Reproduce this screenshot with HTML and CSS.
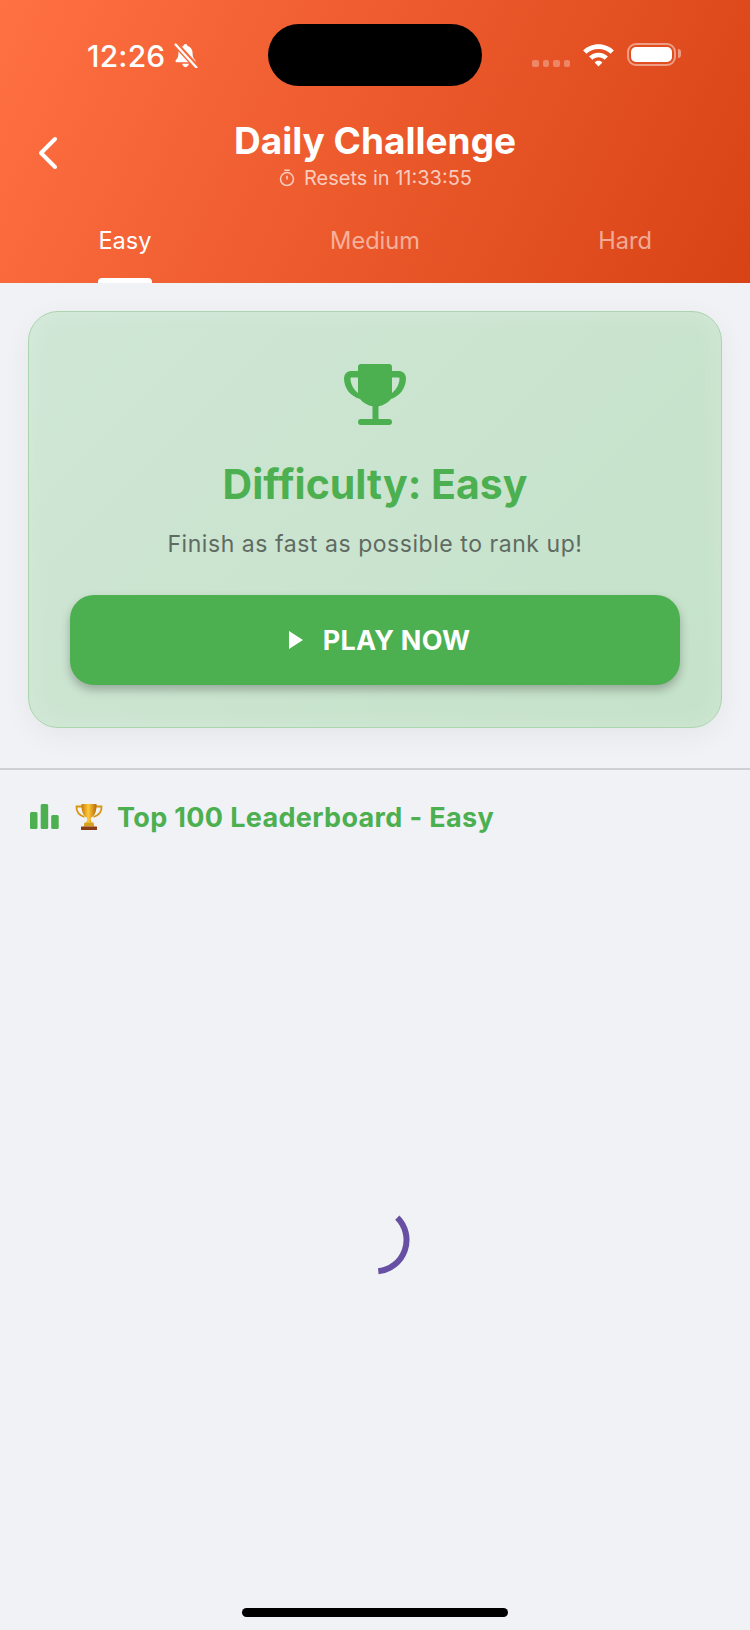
FILE: index.html
```html
<!DOCTYPE html>
<html lang="en">
<head>
    <meta charset="UTF-8">
    <meta name="viewport" content="width=device-width, initial-scale=1.0">
    <title>Daily Challenge</title>
    <link rel="stylesheet" href="styles.css">
</head>
<body>
    <div class="screen">
        <header class="top">
            <div class="status-bar">
                <div class="status-left">
                    <span class="clock">12:26</span>
                    <svg class="bell" viewBox="0 0 24 24" width="25" height="25">
                        <path fill="#fff" d="M12 1c-1.100 0-1.900.8-2 1.800C6.800 3.800 5.200 6.300 5.200 9.500c0 3.600-.8 5.100-2.400 6.700-.8.800-.4 2.300 1 2.300h16.400c1.400 0 1.800-1.500 1-2.300-1.600-1.600-2.400-3.100-2.400-6.700 0-3.200-1.600-5.700-4.800-6.700C13.900 1.800 13.100 1 12 1zM8.800 20c.2 1.800 1.500 3.200 3.200 3.200s3-1.400 3.200-3.200z"/>
                        <path stroke="#fa693b" stroke-width="5.500" d="M2 0.500 23.500 24"/>
                        <path stroke="#fff" stroke-width="2.200" stroke-linecap="round" d="M2.500 1.500 22.500 23.500"/>
                    </svg>
                </div>
                <div class="island"></div>
                <div class="status-right">
                    <div class="signal"><i></i><i></i><i></i><i></i></div>
                    <svg class="wifi" viewBox="0 0 34 24" width="33" height="24">
                        <path fill="#fff" d="M17 1C10.800 1 5.300 3.400 1.200 7.300l3.400 3.500C7.800 7.700 12.200 5.800 17 5.800s9.200 1.900 12.400 5l3.400-3.500C28.700 3.400 23.200 1 17 1z"/>
                        <path fill="#fff" d="M17 9.600c-3.800 0-7.200 1.500-9.700 3.900l3.400 3.400c1.600-1.600 3.900-2.600 6.300-2.600s4.700 1 6.300 2.600l3.400-3.400c-2.500-2.400-5.900-3.900-9.700-3.900z"/>
                        <path fill="#fff" d="M17 18c-1.600 0-3 .6-4 1.600l4 4.200 4-4.200c-1-1-2.400-1.600-4-1.600z"/>
                    </svg>
                    <div class="battery"><div class="battery-fill"></div></div>
                </div>
            </div>
            <div class="nav">
                <svg class="back" viewBox="0 0 24 36" width="24" height="36">
                    <path fill="none" stroke="#fff" stroke-width="4" stroke-linecap="round" stroke-linejoin="round" d="M20 4 6 18l14 14"/>
                </svg>
                <div class="nav-title">
                    <h1>Daily Challenge</h1>
                    <div class="resets">
                        <svg viewBox="0 0 20 20" width="18" height="18">
                            <circle cx="10" cy="11.200" r="7.200" fill="none" stroke="currentColor" stroke-width="1.700"/>
                            <path stroke="currentColor" stroke-width="1.700" d="M7 1.500h6M10 7.500v4.200"/>
                        </svg>
                        <span>Resets in 11:33:55</span>
                    </div>
                </div>
            </div>
            <nav class="tabs">
                <div class="tab active"><span>Easy</span></div>
                <div class="tab"><span>Medium</span></div>
                <div class="tab"><span>Hard</span></div>
            </nav>
        </header>

        <section class="challenge">
            <div class="card">
                <svg class="cup" viewBox="0 0 62 62" width="62" height="62">
                    <path fill="#4caf50" fill-rule="evenodd" d="M17 0h28a3 3 0 0 1 3 3v4h7a7 7 0 0 1 7 7c0 10-6 18-15 21-3 4-8 6.500-12.500 7.300V55H45a3 3 0 0 1 0 6H17a3 3 0 0 1 0-6h11.500V42.300C24 41.500 19 39 16 35 6 32 0 24 0 14a7 7 0 0 1 7-7h7V3a3 3 0 0 1 3-3zM7.500 13.500c-.7 0-1 .4-1 1 0 5.500 3 11 7.500 14.500V13.500zM54.500 13.500H48V29c4.500-3.500 7.500-9 7.500-14.500 0-.6-.3-1-1-1z"/>
                </svg>
                <h2>Difficulty: Easy</h2>
                <p>Finish as fast as possible to rank up!</p>
                <button class="play" type="button">
                    <svg viewBox="0 0 14 18" width="14" height="18"><path fill="#fff" d="M0 0l14 9-14 9z"/></svg>
                    <span>PLAY NOW</span>
                </button>
            </div>
        </section>

        <section class="board">
            <div class="board-head">
                <svg class="bars" viewBox="0 0 29 25" width="29" height="25">
                    <rect x="0" y="8" width="7.500" height="17" rx="1.500" fill="#4caf50"/>
                    <rect x="10.700" y="0" width="7.500" height="25" rx="1.500" fill="#4caf50"/>
                    <rect x="21.200" y="11" width="7.500" height="14" rx="1.500" fill="#4caf50"/>
                </svg>
                <svg class="emoji-cup" viewBox="0 0 28 28" width="28" height="28">
                    <defs>
                        <linearGradient id="gold" x1="0" x2="1" y1="0" y2="0">
                            <stop offset="0" stop-color="#c47a0a"/>
                            <stop offset=".45" stop-color="#ffc93a"/>
                            <stop offset="1" stop-color="#b8690a"/>
                        </linearGradient>
                    </defs>
                    <path fill="none" stroke="#d8950f" stroke-width="1.800" d="M7 3.500H1.500c-.5 5 2.800 9.200 8 10.300M21 3.500h5.500c.5 5-2.800 9.200-8 10.300"/>
                    <path fill="url(#gold)" d="M6.500 1h15c.2 7.500-1.800 12.200-5.500 13.700-.5 2 0 3.500 1 5H11c1-1.500 1.500-3 1-5C8.300 13.200 6.300 8.500 6.500 1z"/>
                    <path fill="#d9a01e" d="M9.500 19.500h9l.8 4H8.700z"/>
                    <rect x="6" y="23.500" width="16" height="3.500" rx=".5" fill="#8a3d14"/>
                </svg>
                <h3>Top 100 Leaderboard - Easy</h3>
            </div>
            <div class="board-body">
                <svg class="spinner" viewBox="0 0 70 70" width="70" height="70">
                    <path fill="none" stroke="#6750a4" stroke-width="6" d="M57.300 12.700A31.500 31.500 0 0 1 38.300 66.300"/>
                </svg>
            </div>
        </section>

        <div class="home-bar"></div>
    </div>
</body>
</html>
```

FILE: styles.css
```css
* {
    box-sizing: border-box;
}
body {
    font-family: Inter, "Liberation Sans", sans-serif;
    background-color: #f0f2f6;
    margin: 0;
}
.screen {
    position: relative;
    display: flex;
    flex-direction: column;
    width: 750px;
    height: 1630px;
    overflow: hidden;
}

/* header */
.top {
    height: 283px;
    flex-shrink: 0;
    color: #fff;
    background: linear-gradient(115deg, #ff7043 0%, #d84315 100%);
}
.status-bar {
    display: flex;
    height: 115px;
    padding-top: 24px;
}
.status-left {
    display: flex;
    align-items: flex-start;
    gap: 8px;
    width: 268px;
    padding: 15px 0 0 87px;
}
.clock {
    font-size: 30px;
    font-weight: 500;
    line-height: 34px;
    letter-spacing: 0.2px;
}
.bell {
    margin-top: 4px;
}
.island {
    width: 214px;
    height: 62px;
    background-color: #000;
    border-radius: 31px;
}
.status-right {
    position: relative;
    display: flex;
    align-items: flex-start;
    padding: 19px 0 0 50px;
}
.signal {
    display: flex;
    gap: 4px;
    margin-top: 17px;
    margin-right: 12px;
}
.signal i {
    width: 6.5px;
    height: 6.5px;
    border-radius: 2px;
    background-color: rgba(255, 255, 255, 0.3);
}
.battery {
    position: relative;
    width: 49px;
    height: 23px;
    margin-left: 12px;
    padding: 2px;
    border: 2px solid rgba(255, 255, 255, 0.45);
    border-radius: 9px;
}
.battery::after {
    content: "";
    position: absolute;
    right: -7px;
    top: 4px;
    width: 3px;
    height: 9px;
    border-radius: 0 3px 3px 0;
    background-color: rgba(255, 255, 255, 0.45);
}
.battery-fill {
    height: 100%;
    border-radius: 5px;
    background-color: #fff;
}
.nav {
    position: relative;
    display: flex;
    justify-content: center;
    height: 78px;
    padding-top: 4px;
}
.back {
    position: absolute;
    left: 35px;
    top: 20px;
}
.nav-title {
    text-align: center;
}
.nav-title h1 {
    margin: 0;
    font-size: 37px;
    font-weight: 700;
    line-height: 44px;
}
.resets {
    display: flex;
    justify-content: center;
    align-items: center;
    gap: 8px;
    margin-top: 3px;
    font-size: 20px;
    line-height: 24px;
    color: rgba(255, 255, 255, 0.7);
}
.tabs {
    display: flex;
    height: 90px;
}
.tab {
    flex: 1;
    display: flex;
    justify-content: center;
    font-size: 23.6px;
    color: rgba(255, 255, 255, 0.55);
}
.tab span {
    height: 90px;
    padding-top: 34px;
    line-height: 28px;
}
.tab.active {
    color: #fff;
}
.tab.active span {
    position: relative;
}
.tab.active span::after {
    content: "";
    position: absolute;
    left: 0;
    right: 0;
    bottom: 0;
    height: 5px;
    background-color: #fff;
    border-radius: 4px 4px 0 0;
}

/* challenge card */
.challenge {
    height: 487px;
    flex-shrink: 0;
    padding: 28px 28px 0;
    border-bottom: 2px solid #cfd0d6;
}
.card {
    display: flex;
    flex-direction: column;
    align-items: center;
    height: 417px;
    padding: 52px 41px 0;
    border: 1.5px solid #aad5ad;
    border-radius: 30px;
    background: linear-gradient(135deg, #cfe6d5, #c5e2c9);
    box-shadow: 0 8px 30px rgba(0, 0, 0, 0.05), inset 0 0 26px rgba(255, 255, 255, 0.2);
}
.card h2 {
    margin: 33px 0 0;
    font-size: 41px;
    font-weight: 700;
    line-height: 50px;
    color: #4caf50;
}
.card p {
    margin: 20px 0 0;
    font-size: 23px;
    line-height: 30px;
    letter-spacing: 0.55px;
    color: #5f6b62;
}
.play {
    display: flex;
    justify-content: center;
    align-items: center;
    gap: 20px;
    flex-shrink: 0;
    width: 100%;
    height: 90px;
    margin-top: 36px;
    padding: 0 0 0 9px;
    border: none;
    border-radius: 24px;
    font-family: inherit;
    font-size: 27px;
    font-weight: 700;
    letter-spacing: 0.25px;
    color: #fff;
    background-color: #4caf50;
    box-shadow: 0 5px 10px rgba(0, 0, 0, 0.25);
}

/* leaderboard */
.board {
    flex: 1;
    display: flex;
    flex-direction: column;
}
.board-head {
    display: flex;
    align-items: center;
    height: 78px;
    padding: 16px 0 0 30px;
}
.bars {
    margin-top: -2px;
}
.emoji-cup {
    margin-left: 16px;
}
.board-head h3 {
    margin: 0 0 0 14px;
    font-size: 27px;
    font-weight: 700;
    letter-spacing: 0.35px;
    color: #4caf50;
}
.board-body {
    flex: 1;
    display: flex;
    justify-content: center;
    align-items: center;
    padding-top: 2px;
}
.home-bar {
    position: absolute;
    left: 242px;
    bottom: 13px;
    width: 266px;
    height: 9px;
    border-radius: 5px;
    background-color: #000;
}
```
